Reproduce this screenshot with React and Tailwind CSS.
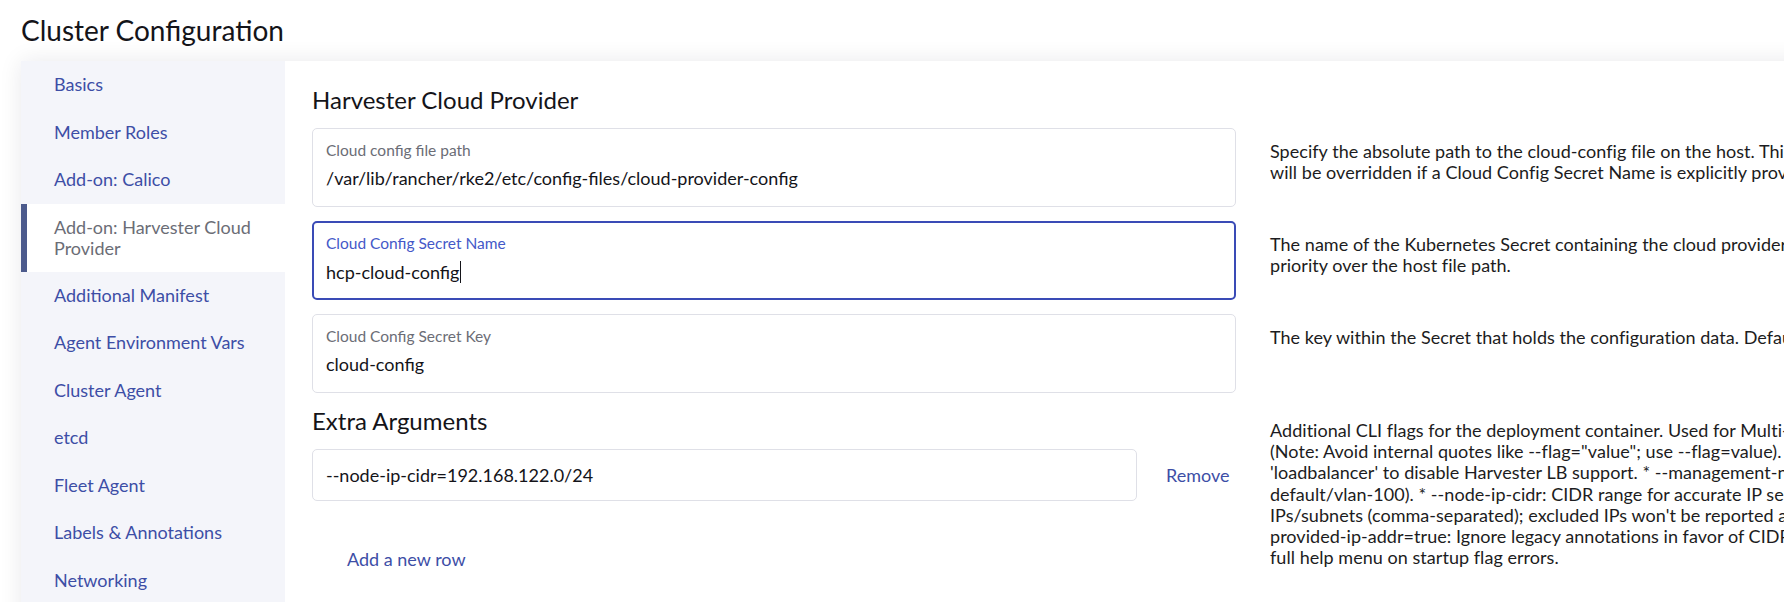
import React from "react";

const NAV = [
  { label: "Basics" },
  { label: "Member Roles" },
  { label: "Add-on: Calico" },
  { label: "Add-on: Harvester Cloud Provider", active: true },
  { label: "Additional Manifest" },
  { label: "Agent Environment Vars" },
  { label: "Cluster Agent" },
  { label: "etcd" },
  { label: "Fleet Agent" },
  { label: "Labels & Annotations" },
  { label: "Networking" },
];

function SideNav() {
  return (
    <nav className="w-[264px] shrink-0 bg-[#f4f5fa] pb-[40px]">
      {NAV.map((item) =>
        item.active ? (
          <div
            key={item.label}
            className="border-l-[6px] border-[#4c5a8c] bg-white py-[13px] pl-[27px] pr-[16px] text-[18px] leading-[21px] text-[#6b6d76]"
          >
            {item.label}
          </div>
        ) : (
          <div
            key={item.label}
            className="border-l-[6px] border-transparent py-[13px] pl-[27px] pr-[16px] text-[18px] leading-[21.5px] text-[#3d4ea6]"
          >
            {item.label}
          </div>
        )
      )}
    </nav>
  );
}

function Field({ label, value, focused }) {
  if (focused) {
    return (
      <div className="h-[79px] w-[924px] shrink-0 rounded-[5px] border-2 border-[#3a4bb6] bg-white px-[12px] pt-[12px]">
        <div className="text-[15.5px] leading-[17px] text-[#4458c8]">{label}</div>
        <div className="mt-[9px] flex items-center text-[18px] leading-[21px] text-[#141419]">
          <span>{value}</span>
          <span className="ml-[1px] h-[22px] w-[1px] bg-[#141419]" />
        </div>
      </div>
    );
  }
  return (
    <div className="h-[79px] w-[924px] shrink-0 rounded-[5px] border border-[#dfe0e7] bg-white px-[13px] pt-[13px]">
      <div className="text-[15.5px] leading-[17px] text-[#6b6d76]">{label}</div>
      <div className="mt-[9px] text-[18px] leading-[21px] text-[#141419]">{value}</div>
    </div>
  );
}

function Help({ lines, top = "pt-[13px]" }) {
  return (
    <div className={`${top} whitespace-nowrap text-[18px] leading-[21.2px] tracking-[0.04px] text-[#1c1c21]`}>
      {lines.map((l, i) => (
        <div key={i}>{l}</div>
      ))}
    </div>
  );
}

export default function App() {
  return (
    <div className="h-[602px] w-[1784px] overflow-hidden bg-white font-['Lato',sans-serif]">
      <h1 className="pl-[21px] pt-[13px] pb-[14px] text-[28px] font-normal leading-[34px] text-[#141419]">
        Cluster Configuration
      </h1>

      <div className="ml-[21px] flex w-[2000px] shadow-[0_0_22px_rgba(20,20,40,0.09)]">
        <SideNav />

        <main className="flex-1 bg-white pl-[27px] pt-[24px]">
          <h3 className="mb-[13px] text-[24px] font-normal leading-[30px] text-[#141419]">
            Harvester Cloud Provider
          </h3>

          <div className="mb-[14px] flex items-start gap-[34px]">
            <Field
              label="Cloud config file path"
              value="/var/lib/rancher/rke2/etc/config-files/cloud-provider-config"
            />
            <Help
              lines={[
                "Specify the absolute path to the cloud-config file on the host. This value",
                "will be overridden if a Cloud Config Secret Name is explicitly provided.",
              ]}
            />
          </div>

          <div className="mb-[14px] flex items-start gap-[34px]">
            <Field label="Cloud Config Secret Name" value="hcp-cloud-config" focused />
            <Help
              lines={[
                "The name of the Kubernetes Secret containing the cloud provider configuration. This takes",
                "priority over the host file path.",
              ]}
            />
          </div>

          <div className="mb-[13px] flex items-start gap-[34px]">
            <Field label="Cloud Config Secret Key" value="cloud-config" />
            <Help
              lines={[
                "The key within the Secret that holds the configuration data. Defaults to 'cloud-config'.",
              ]}
            />
          </div>

          <div className="flex items-start gap-[34px]">
            <div className="w-[924px] shrink-0">
              <h3 className="mb-[13px] text-[24px] font-normal leading-[30px] text-[#141419]">
                Extra Arguments
              </h3>
              <div className="flex items-center">
                <div className="flex h-[52px] w-[825px] items-center rounded-[5px] border border-[#dfe0e7] bg-white px-[13px] text-[18px] leading-[21px] text-[#141419]">
                  --node-ip-cidr=192.168.122.0/24
                </div>
                <button className="ml-[29px] text-[18px] leading-[21px] text-[#3d4ea6]">
                  Remove
                </button>
              </div>
              <button className="mt-[48px] pl-[35px] text-[18px] leading-[21px] text-[#3d4ea6]">
                Add a new row
              </button>
            </div>
            <Help
              top="pt-[14px]"
              lines={[
                "Additional CLI flags for the deployment container. Used for Multi-NIC setups and advanced tuning.",
                "(Note: Avoid internal quotes like --flag=\"value\"; use --flag=value). * --disable-controllers: Set to",
                "'loadbalancer' to disable Harvester LB support. * --management-network: Name of the VM network (e.g.",
                "default/vlan-100). * --node-ip-cidr: CIDR range for accurate IP selection. * --exclude-ips: List of",
                "IPs/subnets (comma-separated); excluded IPs won't be reported as node addresses. * --ignore-",
                "provided-ip-addr=true: Ignore legacy annotations in favor of CIDR selection. * --help: Displays the",
                "full help menu on startup flag errors.",
              ]}
            />
          </div>
        </main>
      </div>
    </div>
  );
}
